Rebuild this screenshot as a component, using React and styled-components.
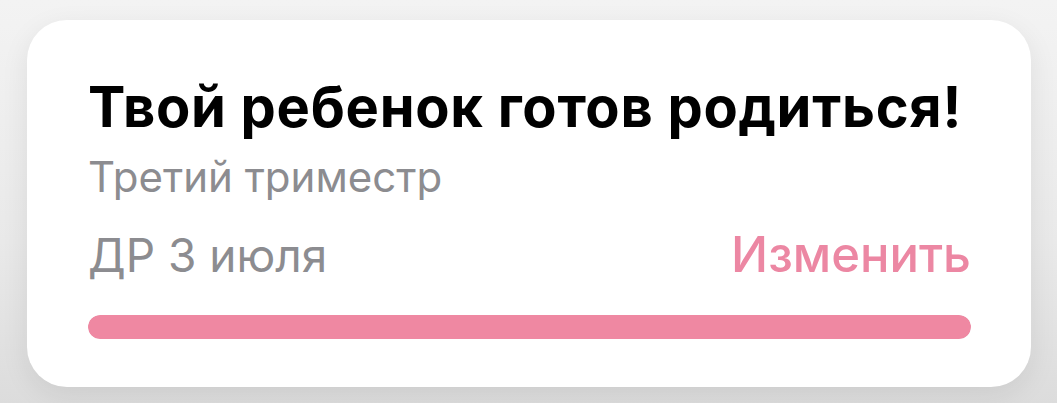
import React from "react";
import styled, { createGlobalStyle } from "styled-components";

const Global = createGlobalStyle`
  html, body { margin: 0; padding: 0; }
  body {
    background: linear-gradient(180deg, #f3f3f3 0%, #e9e9e9 60%, #dcdcdc 100%);
    font-family: Inter, "Noto Sans", sans-serif;
    width: 1057px;
    height: 403px;
    overflow: hidden;
  }
`;

const Page = styled.div`
  padding: 20px 26px 16px 27px;
`;

const Card = styled.section`
  background: #ffffff;
  border-radius: 40px;
  box-shadow: 0 8px 28px rgba(0, 0, 0, 0.08);
  padding: 53px 60px 0 61px;
  height: 367px;
  box-sizing: border-box;
  display: flex;
  flex-direction: column;
`;

const Title = styled.h1`
  margin: 0;
  font-size: 56px;
  font-weight: 700;
  line-height: 68px;
  color: #000;
  letter-spacing: 0.72px;
  white-space: nowrap;
`;

const Subtitle = styled.div`
  margin-top: 10px;
  font-size: 42px;
  line-height: 51px;
  color: #8c8c90;
`;

const Row = styled.div`
  display: flex;
  justify-content: space-between;
  align-items: baseline;
  margin-top: 23px;
  line-height: 60px;
`;

const DateText = styled.span`
  font-size: 46px;
  color: #8c8c90;
`;

const Change = styled.span`
  font-size: 49px;
  font-weight: 450;
  color: #ec87a3;
`;

const Track = styled.div`
  margin-top: 30px;
  height: 24px;
  border-radius: 12px;
  background: #f0ecee;
  overflow: hidden;
`;

const Fill = styled.div`
  height: 100%;
  background: #ef88a2;
  border-radius: 12px;
`;

export default function App() {
  const progress = 100;
  return (
    <>
      <Global />
      <Page>
        <Card>
          <Title>Твой ребенок готов родиться!</Title>
          <Subtitle>Третий триместр</Subtitle>
          <Row>
            <DateText>ДР 3 июля</DateText>
            <Change>Изменить</Change>
          </Row>
          <Track>
            <Fill style={{ width: `${progress}%` }} />
          </Track>
        </Card>
      </Page>
    </>
  );
}
